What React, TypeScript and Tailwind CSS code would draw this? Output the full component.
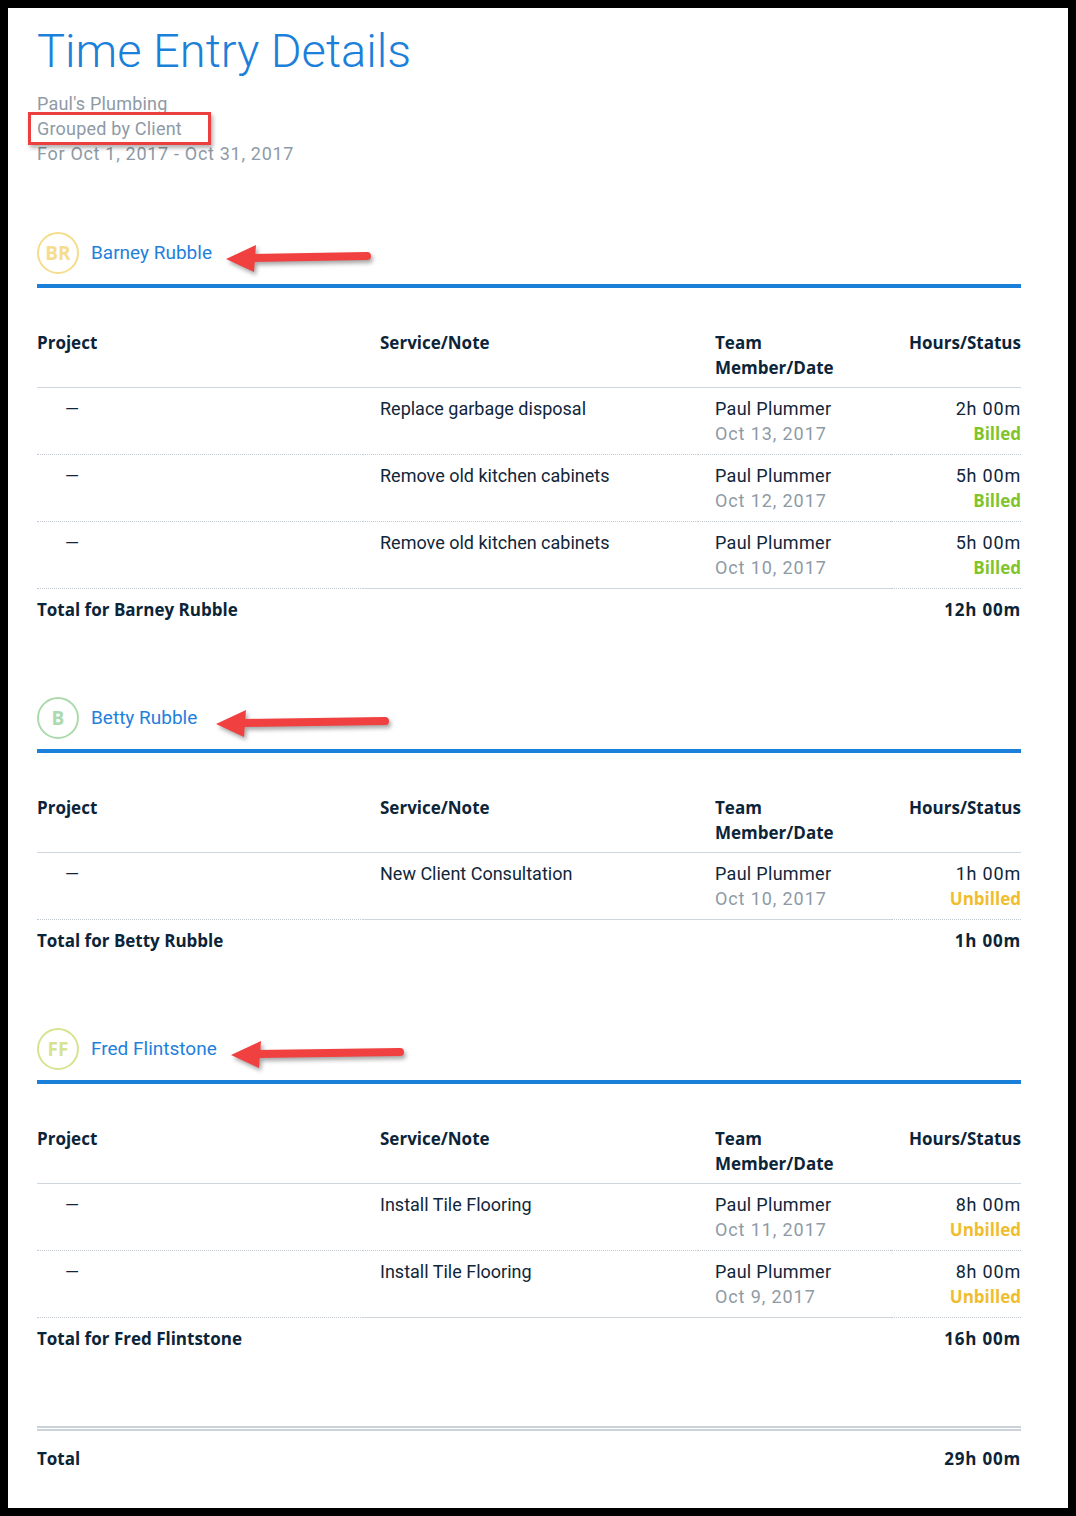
import type { ReactNode } from "react";

type Entry = {
  note: string;
  member: string;
  date: string;
  hours: string;
  status: "Billed" | "Unbilled";
};

type Client = {
  name: string;
  initials: string;
  ring: string;
  arrow: number;
  arrowLen: number;
  total: string;
  entries: Entry[];
};

const clients: Client[] = [
  {
    name: "Barney Rubble",
    initials: "BR",
    ring: "border-[#f5dd8d] text-[#f5dd8d]",
    arrow: 188,
    arrowLen: 148,
    total: "12h 00m",
    entries: [
      { note: "Replace garbage disposal", member: "Paul Plummer", date: "Oct 13, 2017", hours: "2h 00m", status: "Billed" },
      { note: "Remove old kitchen cabinets", member: "Paul Plummer", date: "Oct 12, 2017", hours: "5h 00m", status: "Billed" },
      { note: "Remove old kitchen cabinets", member: "Paul Plummer", date: "Oct 10, 2017", hours: "5h 00m", status: "Billed" },
    ],
  },
  {
    name: "Betty Rubble",
    initials: "B",
    ring: "border-[#acdaac] text-[#acdaac]",
    arrow: 178,
    arrowLen: 176,
    total: "1h 00m",
    entries: [
      { note: "New Client Consultation", member: "Paul Plummer", date: "Oct 10, 2017", hours: "1h 00m", status: "Unbilled" },
    ],
  },
  {
    name: "Fred Flintstone",
    initials: "FF",
    ring: "border-[#d8e392] text-[#d8e392]",
    arrow: 193,
    arrowLen: 176,
    total: "16h 00m",
    entries: [
      { note: "Install Tile Flooring", member: "Paul Plummer", date: "Oct 11, 2017", hours: "8h 00m", status: "Unbilled" },
      { note: "Install Tile Flooring", member: "Paul Plummer", date: "Oct 9, 2017", hours: "8h 00m", status: "Unbilled" },
    ],
  },
];

const cols = "grid grid-cols-[326px_335px_193px_130px]";
const strong = "font-['Open_Sans',sans-serif] text-[17px] font-bold leading-[25px] text-[#0c2438]";

// red callout arrow pointing left, drawn over the page
const Arrow = ({ left, len }: { left: number; len: number }): ReactNode => (
  <svg
    className="absolute top-1/2 -translate-y-1/2 drop-shadow-[2px_3px_2px_rgba(0,0,0,0.35)]"
    style={{ left }}
    width={len}
    height={32}
    viewBox={`0 0 ${len} 32`}
  >
    <line x1={26} y1={16} x2={len - 6} y2={14} stroke="#f0403f" strokeWidth={8} strokeLinecap="round" />
    <polygon points="1,17 31,3 29,30" fill="#f0403f" />
  </svg>
);

const Section = ({ client }: { client: Client }): ReactNode => (
  <section>
    <div className="relative flex items-center gap-3 pb-[10px]">
      <div
        className={`flex h-[42px] w-[42px] items-center justify-center rounded-full border-2 font-['Open_Sans',sans-serif] text-[19px] font-bold ${client.ring}`}
      >
        {client.initials}
      </div>
      <span className="text-[19px] text-[#1f80dc]">{client.name}</span>
      <Arrow left={client.arrow} len={client.arrowLen} />
    </div>
    <div className="h-1 bg-[#1a80da]" />

    <div className={`${cols} ${strong} mt-[42px] border-b border-[#cfd6dd] pb-[7px]`}>
      <div>Project</div>
      <div className="pl-[17px]">Service/Note</div>
      <div className="pl-[17px]">
        Team
        <br />
        Member/Date
      </div>
      <div className="text-right">Hours/Status</div>
    </div>

    {client.entries.map((e, i) => {
      const last = i === client.entries.length - 1;
      const mid = last ? "border-solid border-[#cfd6dd]" : "border-dotted border-[#c3cad1]";
      return (
        <div key={i} className={`${cols} text-[18px] leading-[25px] text-[#10263a]`}>
          <div className="border-b border-dotted border-[#c3cad1] pt-2 pb-2 pl-[28px]">—</div>
          <div className={`border-b pt-2 pb-2 pl-[17px] ${mid}`}>{e.note}</div>
          <div className={`border-b pt-2 pb-2 pl-[17px] ${mid}`}>
            <div className="tracking-[0.3px]">{e.member}</div>
            <div className="tracking-[0.9px] text-[#8e9aa5]">{e.date}</div>
          </div>
          <div className="border-b border-dotted border-[#c3cad1] pt-2 pb-2 text-right">
            <div className="tracking-[0.8px]">{e.hours}</div>
            <div
              className={`font-['Open_Sans',sans-serif] text-[17px] font-bold ${e.status === "Billed" ? "text-[#7fc42b]" : "text-[#f0bd2e]"}`}
            >
              {e.status}
            </div>
          </div>
        </div>
      );
    })}

    <div className={`flex justify-between pt-2 ${strong}`}>
      <span>Total for {client.name}</span>
      <span className="tracking-[0.8px]">{client.total}</span>
    </div>
  </section>
);

export default function App(): ReactNode {
  return (
    <div className="bg-black p-2 font-['Roboto',sans-serif]">
      <div className="min-h-[1500px] bg-white pt-[15px] pr-[47px] pl-[29px]">
        <h1 className="text-[47px] leading-[56px] font-light text-[#1a80da]">Time Entry Details</h1>
        <div className="mt-[12px] text-[18px] leading-[25px] text-[#8e9aa5]">
          <div className="tracking-[0.2px]">Paul&apos;s Plumbing</div>
          <div>
            <span className="relative tracking-[0.2px]">
              Grouped by Client
              <span className="absolute top-[-6px] left-[-9px] h-[33px] w-[183px] border-[3px] border-[#ec4040] shadow-[2px_3px_4px_rgba(0,0,0,0.3)]" />
            </span>
          </div>
          <div className="tracking-[0.7px]">For Oct 1, 2017 - Oct 31, 2017</div>
        </div>

        <div className="mt-[66px] flex flex-col gap-[75px]">
          {clients.map((c) => (
            <Section key={c.name} client={c} />
          ))}
        </div>

        <div className="mt-[75px] border-t-[5px] border-double border-[#cbd2d9] pt-[15px]">
          <div className={`flex justify-between ${strong}`}>
            <span>Total</span>
            <span className="tracking-[0.8px]">29h 00m</span>
          </div>
        </div>
      </div>
    </div>
  );
}
